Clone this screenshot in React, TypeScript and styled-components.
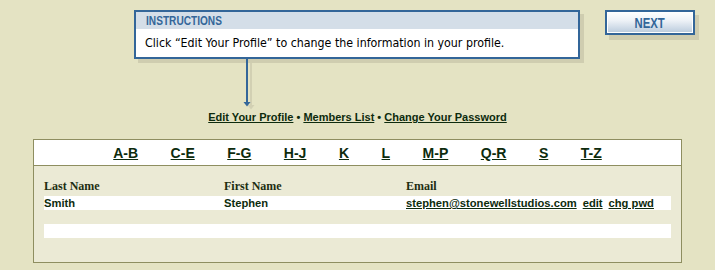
import styled, { createGlobalStyle } from 'styled-components';

const GlobalStyle = createGlobalStyle`
  html, body {
    margin: 0;
    padding: 0;
    background: #e4e3c3;
  }
`;

const Page = styled.div`
  width: 715px;
  height: 270px;
  background: #e4e3c3;
  overflow: hidden;
  font-family: "Liberation Sans", Arial, sans-serif;
`;

const TopRow = styled.div`
  display: flex;
  align-items: flex-start;
  padding: 10px 0 0 134px;
`;

const Callout = styled.div`
  display: flex;
  flex-direction: column;
  width: 446px;
`;

const InstructionBox = styled.div`
  box-sizing: border-box;
  height: 49px;
  border: 2px solid #336699;
  background: #ffffff;
  box-shadow: 4px 4px 0 #cfcdb0;
`;

const InstructionTitle = styled.div`
  height: 17px;
  line-height: 18px;
  background: #d4dee8;
  padding-left: 10px;
  color: #336699;
  font-weight: bold;
  font-size: 12.5px;
`;

// no narrow face installed, so squeeze the bold one
const Condensed = styled.span<{ $origin?: string }>`
  display: inline-block;
  transform: scaleX(0.81);
  transform-origin: ${(p) => p.$origin || 'left center'};
`;

const InstructionText = styled.div`
  height: 28px;
  line-height: 28px;
  padding-left: 9px;
  color: #000;
  font-family: "DejaVu Sans Condensed", "DejaVu Sans", sans-serif;
  font-size: 12.3px;
`;

const ArrowSvg = styled.svg`
  display: block;
  margin-left: 108px;
`;

const NextButton = styled.button`
  box-sizing: border-box;
  margin-left: 25px;
  width: 90px;
  height: 25px;
  padding: 0;
  border: 2px solid #336699;
  background: linear-gradient(to bottom, #ffffff 0%, #eef2f7 40%, #b9cadc 100%);
  box-shadow: inset 0 0 0 1px #ffffff, 4px 5px 0 #cfcdb0;
  color: #336699;
  font-family: "Liberation Sans", Arial, sans-serif;
  font-weight: bold;
  font-size: 14px;
  cursor: pointer;
`;

const NavLinks = styled.div`
  height: 14px;
  line-height: 14px;
  text-align: center;
  font-size: 11px;
  font-weight: bold;
  color: #0d2b0d;
`;

const NavLink = styled.a`
  color: #0d2b0d;
  text-decoration: underline;
`;

const Panel = styled.div`
  box-sizing: border-box;
  margin: 15px 0 0 33px;
  width: 649px;
  height: 124px;
  border: 1px solid #8e8e60;
  background: #ebead5;
`;

const AlphaBar = styled.div`
  display: flex;
  justify-content: center;
  gap: 32.5px;
  height: 25px;
  line-height: 26px;
  background: #ffffff;
  border-bottom: 1px solid #8e8e60;
`;

const AlphaLink = styled.a`
  color: #0d2b0d;
  font-size: 14px;
  font-weight: bold;
  text-decoration: underline;
`;

const Listing = styled.div`
  padding: 13px 10px 0 10px;
`;

const Grid = styled.div<{ $white?: boolean }>`
  display: grid;
  grid-template-columns: 180px 182px 1fr;
  height: 14px;
  line-height: 14px;
  background: ${(p) => (p.$white ? '#ffffff' : 'transparent')};
`;

const HeaderRow = styled(Grid)`
  margin-bottom: 3px;
  font-family: "Liberation Serif", "Times New Roman", serif;
  font-weight: bold;
  font-size: 12px;
  color: #1e2e12;
`;

const DataRow = styled(Grid)`
  margin-bottom: 14px;
  font-size: 11.2px;
  font-weight: bold;
  color: #0d2b0d;
`;

const Cell = styled.div`
  white-space: nowrap;
`;

const RowLink = styled.a`
  color: #0d2b0d;
  text-decoration: underline;
  margin-right: 6px;
`;

const letters = ['A-B', 'C-E', 'F-G', 'H-J', 'K', 'L', 'M-P', 'Q-R', 'S', 'T-Z'];

export default function App() {
  return (
    <Page>
      <GlobalStyle />
      <TopRow>
        <Callout>
          <InstructionBox>
            <InstructionTitle>
              <Condensed>INSTRUCTIONS</Condensed>
            </InstructionTitle>
            <InstructionText>
              Click “Edit Your Profile” to change the information in your profile.
            </InstructionText>
          </InstructionBox>
          <ArrowSvg width="14" height="51" viewBox="0 0 14 51">
            <rect x="8" y="4" width="2" height="44" fill="#d2d0b3" />
            <polygon points="5.5,46 12.5,46 9,50.5" fill="#d2d0b3" />
            <rect x="4" y="0" width="2" height="44" fill="#336699" />
            <polygon points="1.5,43 8.5,43 5,47.5" fill="#336699" />
          </ArrowSvg>
        </Callout>
        <NextButton>
          <Condensed $origin="center center">NEXT</Condensed>
        </NextButton>
      </TopRow>

      <NavLinks>
        <NavLink href="#">Edit Your Profile</NavLink> •{' '}
        <NavLink href="#">Members List</NavLink> •{' '}
        <NavLink href="#">Change Your Password</NavLink>
      </NavLinks>

      <Panel>
        <AlphaBar>
          {letters.map((l) => (
            <AlphaLink key={l} href="#">
              {l}
            </AlphaLink>
          ))}
        </AlphaBar>
        <Listing>
          <HeaderRow>
            <Cell>Last Name</Cell>
            <Cell>First Name</Cell>
            <Cell>Email</Cell>
          </HeaderRow>
          <DataRow $white>
            <Cell>Smith</Cell>
            <Cell>Stephen</Cell>
            <Cell>
              <RowLink href="#">stephen@stonewellstudios.com</RowLink>
              <RowLink href="#">edit</RowLink>
              <RowLink href="#">chg pwd</RowLink>
            </Cell>
          </DataRow>
          <DataRow $white />
        </Listing>
      </Panel>
    </Page>
  );
}
